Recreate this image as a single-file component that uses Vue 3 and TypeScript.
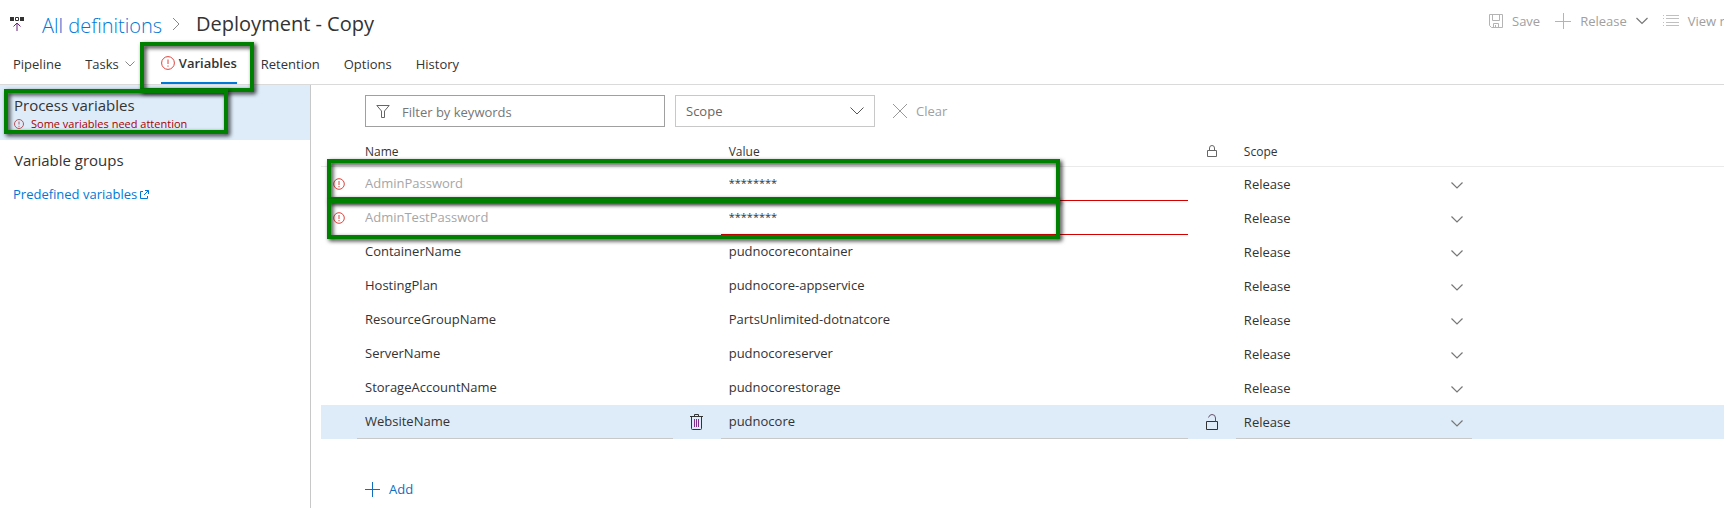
<script setup lang="ts">
import { ref } from 'vue'

interface Variable {
  name: string
  value: string
  scope: string
  secret?: boolean
}

const variables = ref<Variable[]>([
  { name: 'AdminPassword', value: '********', scope: 'Release', secret: true },
  { name: 'AdminTestPassword', value: '********', scope: 'Release', secret: true },
  { name: 'ContainerName', value: 'pudnocorecontainer', scope: 'Release' },
  { name: 'HostingPlan', value: 'pudnocore-appservice', scope: 'Release' },
  { name: 'ResourceGroupName', value: 'PartsUnlimited-dotnatcore', scope: 'Release' },
  { name: 'ServerName', value: 'pudnocoreserver', scope: 'Release' },
  { name: 'StorageAccountName', value: 'pudnocorestorage', scope: 'Release' },
  { name: 'WebsiteName', value: 'pudnocore', scope: 'Release' },
])
const selected = ref(7)
const keywords = ref('')
</script>

<template>
  <div class="page">
    <header class="header">
      <nav class="crumbs" aria-label="Breadcrumb">
        <svg class="logo" width="16" height="16" viewBox="0 0 16 16" aria-hidden="true">
          <path d="M1 1h4v4H1zM11 1h4v4h-4z" fill="#333" />
          <path d="M6.5 1.5h3v3h-3z" fill="none" stroke="#333" />
          <path d="M8 15V7.500M4.500 10.500L8 7l3.500 3.500" fill="none" stroke="#68217a" />
        </svg>
        <a class="parent" href="#">All definitions</a>
        <svg class="sep" width="8" height="14" viewBox="0 0 8 14" aria-hidden="true">
          <path d="M1 1l6 6-6 6" fill="none" stroke="#888" />
        </svg>
        <h1>Deployment - Copy</h1>
      </nav>
      <div class="actions">
        <button type="button" class="save">
          <svg width="14" height="14" viewBox="0 0 14 14" aria-hidden="true">
            <path d="M.5.5h13v13h-11l-2-2zM3.500.5v6h7v-6M4.500 13.500v-4h5v4M6.500 11v2.500" fill="none" stroke="#b4b4b4" />
          </svg>
          Save
        </button>
        <button type="button" class="release">
          <svg width="16" height="16" viewBox="0 0 16 16" aria-hidden="true">
            <path d="M8.500 0v16M0 8.500h16" fill="none" stroke="#b4b4b4" />
          </svg>
          Release
          <svg width="12" height="8" viewBox="0 0 12 8" aria-hidden="true">
            <path d="M.5 1L6 6.500 11.500 1" fill="none" stroke="#777" stroke-width="1.200" />
          </svg>
        </button>
        <button type="button">
          <svg width="16" height="12" viewBox="0 0 16 12" aria-hidden="true">
            <path d="M3 .5h13M3 3.500h13M3 7.500h13M3 10.500h13M0 .5h1M0 3.500h1M0 7.500h1M0 10.500h1" fill="none" stroke="#c0c0c0" />
          </svg>
          View releases
        </button>
      </div>
    </header>

    <nav class="tabs" aria-label="Definition">
      <a class="tab" href="#">Pipeline</a>
      <a class="tab" href="#">
        Tasks
        <svg width="10" height="6" viewBox="0 0 10 6" aria-hidden="true">
          <path d="M.5.5L5 5 9.500.5" fill="none" stroke="#888" />
        </svg>
      </a>
      <a class="tab active" href="#" aria-current="page">
        <span class="active-label">
          <svg width="14" height="14" viewBox="0 0 14 14" aria-hidden="true">
            <circle cx="7" cy="7" r="6.400" fill="none" stroke="#e0433c" />
            <path d="M7 3.500v4.500M7 9.500v1.200" stroke="#e0433c" />
          </svg>
          Variables
        </span>
        <span class="mark mark-tab"></span>
      </a>
      <a class="tab" href="#">Retention</a>
      <a class="tab" href="#">Options</a>
      <a class="tab" href="#">History</a>
    </nav>

    <div class="body">
      <aside class="side">
        <a class="side-item current" href="#">
          <span class="side-title">Process variables</span>
          <span class="warning">
            <svg width="10" height="10" viewBox="0 0 10 10" aria-hidden="true">
              <circle cx="5" cy="5" r="4.500" fill="none" stroke="#b5545c" />
              <path d="M5 2.500v3M5 6.800v1" stroke="#b5545c" />
            </svg>
            Some variables need attention
          </span>
          <span class="mark mark-side"></span>
        </a>
        <a class="side-item" href="#"><span class="side-title">Variable groups</span></a>
        <a class="predefined" href="#">
          Predefined variables
          <svg width="9" height="9" viewBox="0 0 9 9" aria-hidden="true">
            <path d="M3 1.500H.5v7h7V6M5 .5h3.500V4M8.500.5L4 5" fill="none" stroke="#0078d7" />
          </svg>
        </a>
      </aside>

      <main class="main">
        <div class="filters">
          <label class="filter">
            <svg width="14" height="13" viewBox="0 0 14 13" aria-hidden="true">
              <path d="M.8.5h12.400L8.500 6v6.500h-3V6z" fill="none" stroke="#666" />
            </svg>
            <input v-model="keywords" type="text" placeholder="Filter by keywords" aria-label="Filter by keywords" />
          </label>
          <div class="scope-filter">
            <select aria-label="Scope filter">
              <option>Scope</option>
            </select>
            <svg width="14" height="8" viewBox="0 0 14 8" aria-hidden="true">
              <path d="M.5.5L7 7 13.500.5" fill="none" stroke="#555" />
            </svg>
          </div>
          <button type="button" class="clear">
            <svg width="14" height="14" viewBox="0 0 14 14" aria-hidden="true">
              <path d="M0 0l14 14M14 0L0 14" fill="none" stroke="#999" />
            </svg>
            Clear
          </button>
        </div>

        <table>
          <colgroup>
            <col class="c-state" />
            <col class="c-name" />
            <col class="c-icon" />
            <col class="c-value" />
            <col class="c-icon" />
            <col class="c-scope" />
            <col />
          </colgroup>
          <thead>
            <tr>
              <td></td>
              <th scope="col">Name</th>
              <td></td>
              <th scope="col">Value</th>
              <th scope="col" class="icon-cell" aria-label="Secret">
                <svg width="10" height="13" viewBox="0 0 10 13" aria-hidden="true">
                  <path d="M.5 5.500h9v6h-9zM2.500 5.500V3a2.500 2.500 0 0 1 5 0v2.500" fill="none" stroke="#666" />
                </svg>
              </th>
              <th scope="col">Scope</th>
              <td></td>
            </tr>
          </thead>
          <tbody>
            <tr
              v-for="(item, i) in variables"
              :key="i"
              :class="{ secret: item.secret, selected: i === selected }"
              @click="selected = i"
            >
              <td class="state">
                <svg v-if="item.secret" width="12" height="12" viewBox="0 0 12 12" aria-hidden="true">
                  <circle cx="6" cy="6" r="5.300" fill="none" stroke="#e0433c" />
                  <path d="M6 3v4M6 8v1.200" stroke="#e0433c" />
                </svg>
                <span v-if="item.secret" class="mark mark-row"></span>
              </td>
              <td><input v-model="item.name" class="field name" type="text" :aria-label="`Name ${i + 1}`" /></td>
              <td class="icon-cell">
                <button v-if="i === selected" type="button" aria-label="Delete variable">
                  <svg width="13" height="16" viewBox="0 0 13 16" aria-hidden="true">
                    <path d="M0 2.500h13M4.500 2.500v-2h4v2M1.500 2.500v12q0 1 1 1h8q1 0 1-1v-12" fill="none" stroke="#333" />
                    <path d="M4.500 5v8M6.500 5v8M8.500 5v8" stroke="#80308a" />
                  </svg>
                </button>
              </td>
              <td><input v-model="item.value" class="field value" type="text" :aria-label="`Value ${i + 1}`" /></td>
              <td class="icon-cell">
                <button v-if="i === selected" type="button" aria-label="Make secret">
                  <svg width="12" height="16" viewBox="0 0 12 16" aria-hidden="true">
                    <path d="M.5 7.500h11v8H.5z" fill="none" stroke="#333" />
                    <path d="M2.500 3.500q1-3 3.500-3 3.500 0 3.500 3.500v3.500" fill="none" stroke="#68506e" />
                  </svg>
                </button>
              </td>
              <td>
                <div class="scope">
                  <select v-model="item.scope" class="field" :aria-label="`Scope ${i + 1}`">
                    <option>Release</option>
                  </select>
                  <svg width="12" height="7" viewBox="0 0 12 7" aria-hidden="true">
                    <path d="M.5.5L6 6 11.500.5" fill="none" stroke="#777" stroke-width="1.200" />
                  </svg>
                </div>
              </td>
              <td></td>
            </tr>
          </tbody>
        </table>

        <button type="button" class="add">
          <svg width="15" height="15" viewBox="0 0 15 15" aria-hidden="true">
            <path d="M7.500 0v15M0 7.500h15" fill="none" stroke="#106ebe" />
          </svg>
          Add
        </button>
      </main>
    </div>
  </div>
</template>

<style>
html,
body,
#app {
  height: 100%;
}
body {
  margin: 0;
  background: #fff;
}
</style>

<style scoped>
.page {
  display: flex;
  flex-direction: column;
  min-height: 100%;
  font: 13px/20px 'Segoe UI', 'Open Sans', 'Noto Sans', sans-serif;
  color: #333;
}
* {
  box-sizing: border-box;
}
a {
  color: inherit;
  text-decoration: none;
}
button,
input,
select {
  margin: 0;
  padding: 0;
  border: 0;
  background: none;
  font: inherit;
  color: inherit;
}
input,
select {
  outline: none;
  appearance: none;
}
button {
  display: flex;
  align-items: center;
  gap: 9px;
  white-space: nowrap;
}
svg {
  display: block;
  flex: none;
}

.header {
  display: flex;
  justify-content: space-between;
  height: 44px;
}
.crumbs {
  display: flex;
  align-items: center;
  padding: 4px 0 0 9px;
  white-space: nowrap;
}
.parent {
  margin: 4px 10px 0 17px;
  font-size: 20px;
  line-height: 28px;
  font-weight: 300;
  color: #0078d7;
}
h1 {
  margin: 0 0 0 16px;
  font-size: 20px;
  line-height: 28px;
  font-weight: 400;
}
.sep {
  margin-bottom: 1px;
}
.actions {
  display: flex;
  align-items: center;
  gap: 15px;
  flex: none;
  width: 235px;
  height: 42px;
  overflow: hidden;
  color: #a0a0a0;
}

.tabs {
  display: flex;
  gap: 24px;
  height: 41px;
  padding-left: 13px;
  border-bottom: 1px solid #dadada;
}
.tab {
  display: flex;
  align-items: center;
  gap: 6px;
  height: 40px;
}
.active {
  position: relative;
  margin-left: 2px;
  font-weight: 600;
}
.active-label {
  display: flex;
  align-items: center;
  gap: 4px;
  height: 40px;
  border-bottom: 2px solid #0078d7;
}

.mark {
  position: absolute;
  z-index: 1;
  border: 4px solid #008000;
  filter: drop-shadow(2px 2px 2px rgba(0, 0, 0, 0.8));
  pointer-events: none;
}
.mark-tab {
  inset: -2px -17px -8px -21px;
}
.mark-side {
  inset: 4px 82px 6px 4px;
}
.mark-row {
  top: -8px;
  left: 6px;
  width: 52.25%;
  height: 42px;
}
.secret + .secret .mark-row {
  top: -2px;
  height: 40px;
}

.body {
  display: flex;
  flex: 1;
}
.side {
  flex: none;
  width: 311px;
  border-right: 1px solid #c8c8c8;
}
.side-item {
  display: flex;
  flex-direction: column;
  padding: 10px 14px;
}
.current {
  position: relative;
  height: 55px;
  background: #deecf9;
}
.side-title {
  font-size: 15px;
  line-height: 20px;
}
.warning {
  display: flex;
  align-items: center;
  gap: 7px;
  font-size: 11px;
  line-height: 18px;
  color: #a80000;
}
.predefined {
  display: flex;
  align-items: center;
  gap: 3px;
  padding: 4px 13px;
  color: #0078d7;
}

.main {
  flex: 1;
  min-width: 0;
  padding: 10px 0 0 10px;
}
.filters {
  display: flex;
  gap: 10px;
  padding-left: 44px;
}
.filter {
  display: flex;
  align-items: center;
  gap: 12px;
  width: 300px;
  height: 32px;
  padding: 0 10px;
  border: 1px solid #a0a0a0;
}
.filter input {
  flex: 1;
  min-width: 0;
  padding-top: 2px;
}
.filter input::placeholder {
  color: #767676;
  opacity: 1;
}
.scope-filter {
  position: relative;
  width: 200px;
  height: 32px;
  border: 1px solid #c8c8c8;
  color: #666;
}
.scope-filter select {
  width: 100%;
  height: 30px;
  padding-left: 10px;
}
.scope-filter svg {
  position: absolute;
  top: 11px;
  right: 10px;
  pointer-events: none;
}
.clear {
  margin-left: 8px;
  color: #a0a0a0;
}

table {
  width: 100%;
  margin-top: 10px;
  border-collapse: separate;
  border-spacing: 0;
  table-layout: fixed;
}
.c-state {
  width: 36px;
}
.c-name {
  width: 22.5%;
}
.c-icon {
  width: 48px;
}
.c-value {
  width: 33.3%;
}
.c-scope {
  width: 16.8%;
}
td,
th {
  height: 34px;
  padding: 0;
  vertical-align: top;
}
thead td,
thead th {
  height: 30px;
  padding: 0 8px;
  border-bottom: 1px solid #eaeaea;
  font-size: 12px;
  font-weight: 400;
  text-align: left;
  vertical-align: middle;
}
tbody tr {
  position: relative;
}
.selected {
  background: #deecf9;
}
.state svg {
  margin: 11px 0 0 12px;
}
.icon-cell {
  vertical-align: middle;
}
.icon-cell svg {
  margin: 0 auto;
}
.icon-cell button {
  width: 100%;
}
.field {
  display: block;
  width: 100%;
  height: 34px;
  padding: 0 8px;
  border-bottom: 1px solid transparent;
}
input.field {
  padding-bottom: 2px;
}
.secret .name {
  color: #a6a6a6;
}
.secret .value {
  border-color: #d40000;
  font-size: 11px;
}
.selected .field {
  border-color: #c8c8c8;
}
.scope {
  position: relative;
}
.scope svg {
  position: absolute;
  top: 15px;
  right: 9px;
  pointer-events: none;
}
.add {
  margin: 40px 0 0 44px;
  color: #106ebe;
}
</style>
